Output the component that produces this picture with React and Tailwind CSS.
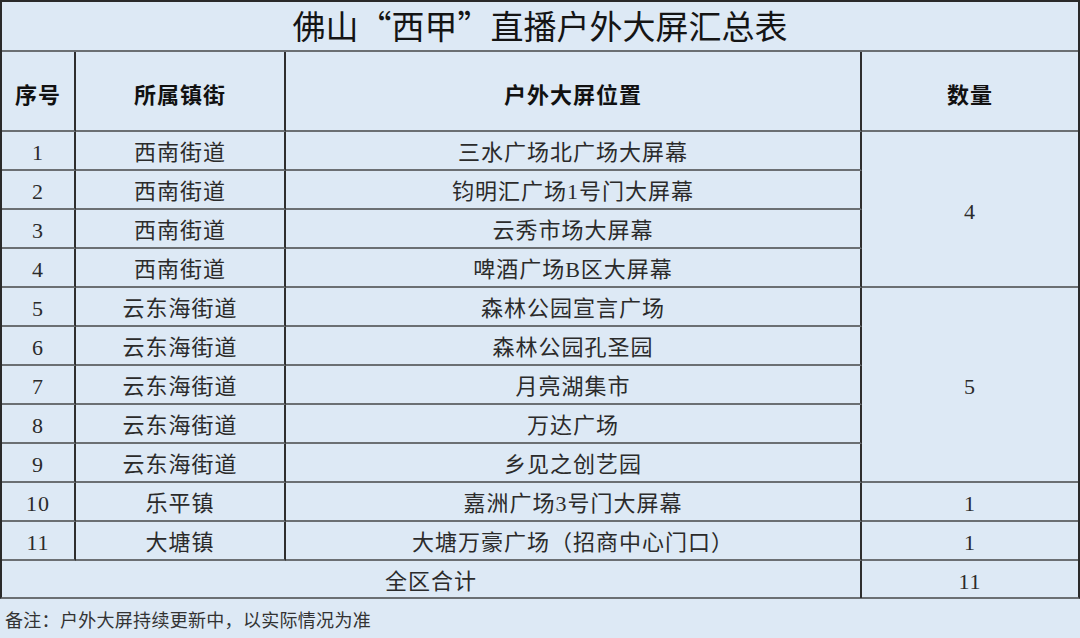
const rows = [
  { no: 1, town: "西南街道", place: "三水广场北广场大屏幕" },
  { no: 2, town: "西南街道", place: "钧明汇广场1号门大屏幕" },
  { no: 3, town: "西南街道", place: "云秀市场大屏幕" },
  { no: 4, town: "西南街道", place: "啤酒广场B区大屏幕" },
  { no: 5, town: "云东海街道", place: "森林公园宣言广场" },
  { no: 6, town: "云东海街道", place: "森林公园孔圣园" },
  { no: 7, town: "云东海街道", place: "月亮湖集市" },
  { no: 8, town: "云东海街道", place: "万达广场" },
  { no: 9, town: "云东海街道", place: "乡见之创艺园" },
  { no: 10, town: "乐平镇", place: "嘉洲广场3号门大屏幕" },
  { no: 11, town: "大塘镇", place: "大塘万豪广场（招商中心门口）" },
];

const serif = "font-['Liberation_Serif','Noto_Sans_CJK_SC',serif]";
const sans = "font-['Noto_Sans_CJK_SC',sans-serif]";
const cell =
  "flex items-center justify-center pt-[4px] border-b-2 border-b-[#6b6f73] border-r-2 border-r-[#2e2e2e]";
const last = "flex items-center justify-center pt-[4px] border-b-2 border-b-[#6b6f73]";

export default function App() {
  return (
    <div className="w-[1080px] h-[638px] bg-[#dde9f5] overflow-hidden">
      <div className="h-[599px] border-2 border-t-[#2a2a2a] border-l-[#2a2a2a] border-r-[#2a2a2a] border-b-[#6b6f73]">
        {/* title */}
        <div
          className={`h-[50px] border-b-2 border-b-[#6b6f73] flex items-center justify-center text-[33px] text-[#151515] ${sans}`}
        >
          佛山“西甲”直播户外大屏汇总表
        </div>

        {/* header */}
        <div
          className={`grid grid-cols-[74px_210px_576px_1fr] h-[80px] text-[22px] font-bold text-[#111] tracking-[1px] ${sans}`}
        >
          <div className={cell}>序号</div>
          <div className={cell}>所属镇街</div>
          <div className={cell}>户外大屏位置</div>
          <div className={last}>数量</div>
        </div>

        {/* body */}
        <div
          className={`grid grid-cols-[74px_210px_576px_1fr] grid-rows-[repeat(11,39px)] text-[22px] text-[#2b2b2b] tracking-[1px] ${serif}`}
        >
          {rows.map((r, i) => (
            <Row key={r.no} r={r} i={i} />
          ))}
        </div>

        {/* total */}
        <div
          className={`grid grid-cols-[860px_1fr] h-[37px] text-[22px] text-[#2b2b2b] tracking-[1px] ${serif}`}
        >
          <div className="flex items-center justify-center pt-[4px] border-r-2 border-r-[#2e2e2e]">
            全区合计
          </div>
          <div className="flex items-center justify-center pt-[4px]">11</div>
        </div>
      </div>

      <div
        className={`h-[39px] flex items-center pl-[5px] pt-[2px] text-[18px] tracking-[0.3px] text-[#333] ${sans}`}
      >
        备注：户外大屏持续更新中，以实际情况为准
      </div>
    </div>
  );
}

function Row({ r, i }) {
  const rowStart = ["row-start-1", "row-start-2", "row-start-3", "row-start-4", "row-start-5", "row-start-6", "row-start-7", "row-start-8", "row-start-9", "row-start-10", "row-start-11"][i];
  return (
    <>
      <div className={`${cell} col-start-1 ${rowStart}`}>{r.no}</div>
      <div className={`${cell} col-start-2 ${rowStart}`}>{r.town}</div>
      <div className={`${cell} col-start-3 ${rowStart}`}>{r.place}</div>
      {r.no === 1 && <div className={`${last} col-start-4 row-start-1 row-span-4`}>4</div>}
      {r.no === 5 && <div className={`${last} col-start-4 row-start-5 row-span-5`}>5</div>}
      {r.no === 10 && <div className={`${last} col-start-4 row-start-10`}>1</div>}
      {r.no === 11 && <div className={`${last} col-start-4 row-start-11`}>1</div>}
    </>
  );
}
